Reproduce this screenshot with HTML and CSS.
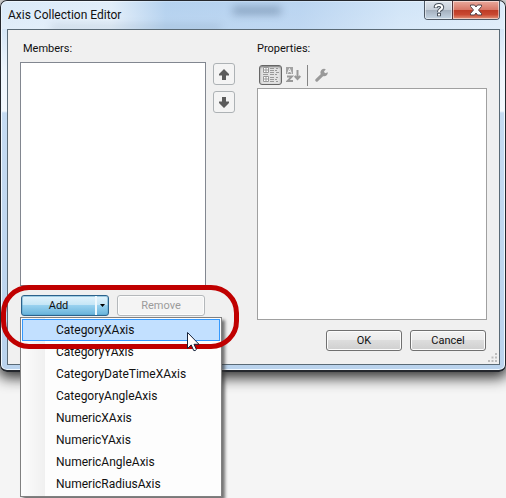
FILE: index.html
```
<!DOCTYPE html>
<html lang="en">
<head>
<meta charset="utf-8">
<title>Axis Collection Editor</title>
<link rel="stylesheet" href="styles.css">
</head>
<body>
<main class="window" role="dialog" aria-labelledby="title">
  <header class="titlebar">
    <span class="ghost ghost-one" aria-hidden="true"></span>
    <span class="ghost ghost-two" aria-hidden="true"></span>
    <h1 id="title">Axis Collection Editor</h1>
    <div class="caption">
      <button class="help" type="button" aria-label="Help">
        <svg width="12" height="14" viewBox="0 0 12 14"><path d="M2.8 5V3.5Q3.2 2 6 2T9.2 4.2Q9.2 5.7 7.3 6.7Q6 7.4 6 9.200M6 10v3.200" fill="none" stroke="#47505b" stroke-width="4"/><path d="M2.8 4.6V3.5Q3.2 2 6 2T9.2 4.2Q9.2 5.7 7.3 6.7Q6 7.4 6 9M6 10.7v1.8" fill="none" stroke="#fff" stroke-width="2"/></svg>
      </button>
      <button class="close" type="button" aria-label="Close">
        <svg width="14" height="12" viewBox="0 0 14 12"><path d="M1.5 1h4L7 3l1.500-2h4v1.500L9.500 6l3 3.500V11h-4L7 9l-1.500 2h-4V9.500L4.500 6l-3-3.500z" fill="#fff" stroke="#544449"/></svg>
      </button>
    </div>
  </header>
  <div class="client">
    <section class="members">
      <h2 id="members">Members:</h2>
      <div class="list" role="listbox" aria-labelledby="members" tabindex="0"></div>
      <div class="actions">
        <div class="split">
          <button class="add" type="button">Add</button>
          <button class="drop" type="button" aria-label="Choose axis type" aria-expanded="true"><svg width="5" height="3" viewBox="0 0 5 3"><path d="M0 0h5L2.500 3z"/></svg></button>
          <ul class="menu" role="menu">
            <li><button type="button" role="menuitem" class="selected">CategoryXAxis</button></li>
            <li><button type="button" role="menuitem">CategoryYAxis</button></li>
            <li><button type="button" role="menuitem">CategoryDateTimeXAxis</button></li>
            <li><button type="button" role="menuitem">CategoryAngleAxis</button></li>
            <li><button type="button" role="menuitem">NumericXAxis</button></li>
            <li><button type="button" role="menuitem">NumericYAxis</button></li>
            <li><button type="button" role="menuitem">NumericAngleAxis</button></li>
            <li><button type="button" role="menuitem">NumericRadiusAxis</button></li>
          </ul>
          <span class="highlight" aria-hidden="true"></span>
          <svg class="pointer" width="13" height="20" viewBox="0 0 13 20" aria-hidden="true"><path d="M.5.500v16l3.700-3.600 2.500 5.600q1.500.700 2.700-1l-2.400-5.200h5z" fill="#fff" stroke="#17233a"/></svg>
        </div>
        <button class="plain" type="button" disabled>Remove</button>
      </div>
    </section>
    <div class="movers">
      <button type="button" aria-label="Move up"><svg width="10" height="11" viewBox="0 0 10 11"><path d="M5 0l5 5v1.500H7V11H3V6.500H0V5z"/></svg></button>
      <button type="button" aria-label="Move down"><svg width="10" height="11" viewBox="0 0 10 11"><path d="M5 11l5-5V4.500H7V0H3v4.500H0V6z"/></svg></button>
    </div>
    <section class="properties">
      <h2 id="properties">Properties:</h2>
      <div class="toolbar" role="toolbar">
        <button class="pressed" type="button" aria-label="Categorized">
          <svg width="16" height="16" viewBox="0 0 16 16"><path d="M.5.500h5v5h-5zM.5 9.500h5v5h-5z" fill="#fff" stroke="#999"/><path d="M1 3h4M3 1v4M1 12h4M3 10v4M0 7.500h5M7 1.500h4M7 3.500h4M7 5.500h4M7 7.500h4M7 10.500h4M7 12.500h4M7 14.500h4M13 1.500h2M12 3.500h2M13 5.500h3M12 7.500h2M13 10.500h2M12 12.500h2M13 14.500h2" fill="none" stroke="#999"/></svg>
        </button>
        <button type="button" aria-label="Alphabetical">
          <svg width="16" height="16" viewBox="0 0 16 16"><path d="M0 0h7v7H0z" fill="#a2a2a2"/><path d="M1.500 6.500l2-5 2 5M2.500 4.500h2" fill="none" stroke="#f5f5f5"/><path d="M1 9.500h5L1.500 14H7" fill="none" stroke="#999" stroke-width="1.800"/><path d="M11.500 3v9M8.700 9l2.800 3 2.800-3" fill="none" stroke="#999" stroke-width="2"/></svg>
        </button>
        <span class="divider"></span>
        <button type="button" aria-label="Property pages">
          <svg width="14" height="14" viewBox="0 0 14 14"><path d="M1.800 12.200L8 6.200" stroke="#999" stroke-width="3" stroke-linecap="round"/><path d="M10.800 1.200A3.700 3.700 0 1 0 12.800 4.200L10.200 5.200 8.900 3.800z" fill="#999"/></svg>
        </button>
      </div>
      <div class="grid" aria-labelledby="properties" tabindex="0"></div>
      <div class="confirm">
        <button class="plain" type="button">OK</button>
        <button class="plain" type="button">Cancel</button>
      </div>
    </section>
    <svg class="grip" width="9" height="9" viewBox="0 0 9 9" aria-hidden="true"><path d="M7 0h2v2H7zM3.500 3.500h2v2h-2zM7 3.500h2v2H7zM0 7h2v2H0zM3.500 7h2v2h-2zM7 7h2v2H7z" fill="#bdbdbd"/></svg>
  </div>
</main>
</body>
</html>
```
FILE: styles.css
```
* { box-sizing: border-box; }

body {
  margin: 0;
  min-height: 100vh;
  overflow: hidden;
  background: #f5f5f5;
  color: #111;
  font: 11px/16px Roboto, sans-serif;
}

h1, h2 { margin: 0; font-weight: normal; }
h2 { font-size: 11px; }
.members h2 { padding-left: 3px; }
button { margin: 0; padding: 0; font: inherit; color: inherit; }
svg { display: block; }

.window {
  position: relative;
  padding: 0 5px 5px 6px;
  border: 2px solid #24272d;
  border-width: 1px 1px 2px;
  border-radius: 7px;
  background: linear-gradient(#c5dcf3, #eef5fc 70px, #f3f8fd 110px, #c5dbf2 112px, #bad3ed 100%);
  box-shadow: inset 0 0 0 1px #f0f8ff, 0 4px 14px 2px #333;
}

.titlebar {
  position: relative;
  display: flex;
  justify-content: space-between;
  height: 28px;
  margin: 0 -5px 0 -6px;
  padding: 0 5px 0 7px;
  border-radius: 6px 6px 0 0;
  background: linear-gradient(90deg, #e8f2fb99, #f2f8fd99 110px, #a9caec99 165px, #b2cfef99 300px, #d9eafa99 400px, #eaf4fd99);
}

h1 { position: relative; padding-top: 6px; font-size: 12px; }

.ghost { position: absolute; height: 7px; background: #3d5878; filter: blur(4px); opacity: .45; }
.ghost-one { left: 46%; top: 6px; width: 48px; }
.ghost-two { left: 10%; bottom: -1px; width: 170px; height: 4px; opacity: .25; }

.caption {
  position: relative;
  display: flex;
  height: 19px;
  border: 1px solid #4d5865;
  border-top: 0;
  border-radius: 0 0 4px 4px;
  overflow: hidden;
}

.caption button { display: grid; place-items: center; border: 0; box-shadow: inset 0 0 0 1px #ffffff80; }
.help { width: 27px; background: linear-gradient(#dce3eb, #c6ced8 50%, #a3afbd 51%, #c5d5e4); }
.caption .close { width: 47px; border-left: 1px solid #55343a; background: linear-gradient(#e9aa9d, #d87868 48%, #bd3b25 50%, #c94831 75%, #e3947a); }

.client {
  position: relative;
  display: grid;
  grid-template-columns: minmax(0, 186fr) 22px minmax(0, 259fr);
  padding: 11px 12px 13px;
  border: 1px solid #5a6a76;
  background: #f0f0f0;
}

.list, .grid { background: #fff; border: 1px solid #828790; }
.list { height: 224px; margin-top: 5px; }
.grid { height: 232px; border-color: #a0a0a0; }

.actions { display: grid; grid-template-columns: 1fr 1fr; gap: 8px; margin: 9px 1px 0; }

.split {
  position: relative;
  display: flex;
  height: 21px;
  border: 1px solid #2c628b;
  border-radius: 3px;
  background: linear-gradient(#e3f4fc, #c4e5f6 48%, #98d1ef 50%, #68b3db);
  box-shadow: inset 0 0 0 1px #5aa4ca80;
}

.add, .drop { border: 0; background: none; }
.add { flex: 1; }
.drop { display: grid; place-items: center; width: 13px; border-left: 2px solid #eef8fd; }

.plain {
  height: 21px;
  border: 1px solid #707070;
  border-radius: 3px;
  background: linear-gradient(#f3f3f3, #ebebeb 48%, #dddddd 50%, #cfcfcf);
  box-shadow: inset 0 0 0 1px #fcfcfc;
}
.plain:disabled { color: #9b9b9b; border-color: #b4b8bb; background: #f4f4f4; }

.menu {
  position: absolute;
  z-index: 1;
  top: 21px;
  left: -2px;
  width: 202px;
  margin: 0;
  padding: 1px;
  border: 1px solid #808080;
  list-style: none;
  background: linear-gradient(90deg, #fcfcfc, #f0f0f0 24px, #fdfdfd 24px);
  box-shadow: 3px 3px 3px #333a;
}

.menu li { display: block; }
.menu button {
  display: block;
  width: 100%;
  height: 22px;
  padding: 0 0 0 33px;
  border: 1px solid transparent;
  background: none;
  text-align: left;
  font-size: 12px;
}
.menu .selected { border-color: #3399ff; background: #c2e0ff; }

.highlight {
  position: absolute;
  z-index: 2;
  top: -11px;
  left: -21px;
  width: 238px;
  height: 64px;
  border: 5px solid #c00000;
  border-radius: 28px;
  pointer-events: none;
}

.pointer { position: absolute; z-index: 3; top: 36px; left: 165px; }

.movers { display: flex; flex-direction: column; gap: 6px; padding-top: 22px; margin: 0 -7px 0 7px; }
.movers button {
  display: grid;
  place-items: center;
  width: 22px;
  height: 22px;
  border: 1px solid #adb2b5;
  border-radius: 3px;
  background: #f4f4f4;
  fill: #5c5c5c;
}

.properties { margin-left: 29px; }
.toolbar { display: flex; align-items: center; gap: 1px; height: 31px; padding: 7px 2px 2px; }
.toolbar button { display: grid; place-items: center; width: 22px; height: 22px; border: 0; border-radius: 3px; background: none; }
.toolbar .pressed { width: 23px; height: 20px; border: 1px solid #666; background: #e2e2e2; box-shadow: inset 0 1px 2px #777; }
.divider { width: 1px; height: 21px; margin: 0 2px 0 1px; background: #858585; }

.confirm { display: flex; justify-content: flex-end; gap: 8px; margin: 10px 1px 0 0; }
.confirm .plain { width: 76px; }

.grip { position: absolute; right: 2px; bottom: 2px; }
```
